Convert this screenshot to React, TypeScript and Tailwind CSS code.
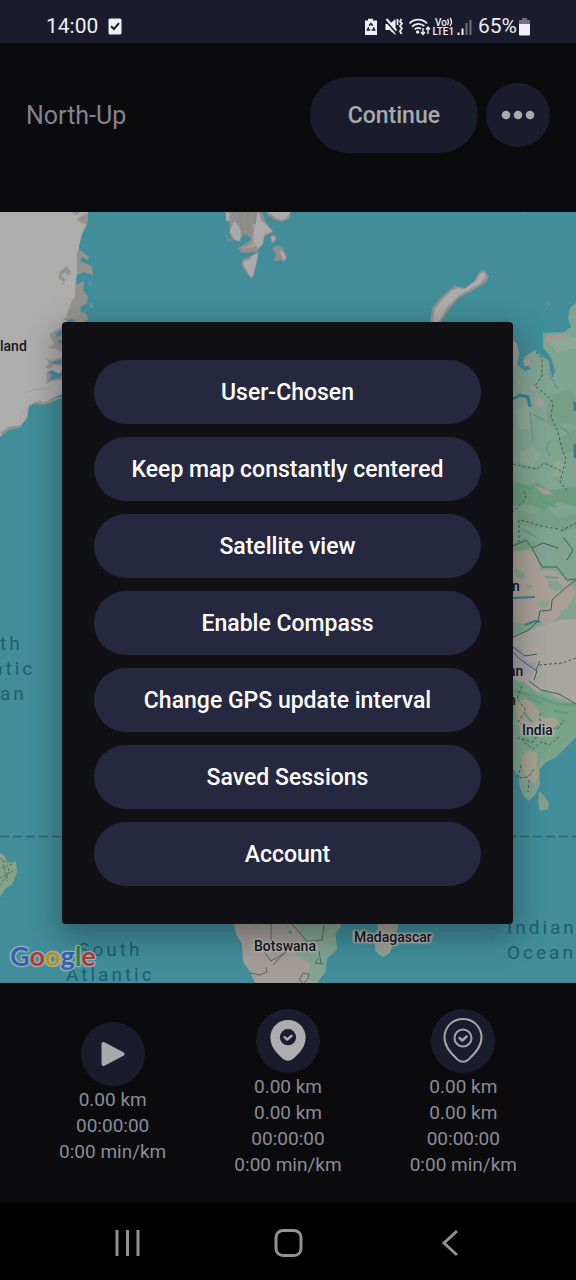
import type { ReactNode } from "react";

const MENU_ITEMS = [
  "User-Chosen",
  "Keep map constantly centered",
  "Satellite view",
  "Enable Compass",
  "Change GPS update interval",
  "Saved Sessions",
  "Account",
];

function StatusBar() {
  return (
    <div className="flex items-center justify-between bg-[#1a1c2e] pt-[13px] pr-[46px] pb-[3px] pl-[46px] text-[21px] leading-[27px] text-[#eeeef4]">
      <div className="flex items-center gap-[10px]">
        <span>14:00</span>
        <svg width="14" height="17" viewBox="0 0 14 17" aria-hidden="true">
          <rect x="0.5" y="0.5" width="13" height="16" rx="1.5" fill="#eeeef4" />
          <path d="M3 8.2 L6 11 L11 5.2" fill="none" stroke="#1a1c2e" strokeWidth="2" />
        </svg>
      </div>
      <div className="flex items-center">
        <svg width="107" height="20" viewBox="0 0 107 20" aria-hidden="true" fill="#eeeef4">
          <path d="M0 3.5h3V1.8h5v1.7h4V18H0z" />
          <g fill="none" stroke="#1a1c2e" strokeWidth="1.5">
            <path d="M4.2 8.8 L5.9 6.4 L7.7 8.8" />
            <path d="M3.7 10.3 L2.5 13 H5.3" />
            <path d="M8.3 10.3 L9.6 13 H6.6" />
          </g>
          <path d="M20.5 7h4l6-5v16l-6-5h-4z" />
          <path d="M20.5 3 L33 17.500" stroke="#1a1c2e" strokeWidth="2.5" />
          <path d="M21.5 2 L31.5 13.500" stroke="#eeeef4" strokeWidth="2" />
          <g fill="none" stroke="#eeeef4" strokeWidth="1.8">
            <path d="M32.5 2v6" />
            <path d="M36.5 2 l-1.500 2.500 2 2 -2 2.500 2 2.500 -2 2.500 1.500 3" />
          </g>
          <g fill="none" stroke="#eeeef4" strokeWidth="1.8">
            <path d="M44.5 6.5 C49 1.3 57.5 1.3 62 6.5" />
            <path d="M47 9.6 C50.5 6 56 6 59.3 9.2" />
            <path d="M49.7 12.4 C51.6 10.6 54.2 10.6 56 12" />
          </g>
          <circle cx="52.6" cy="15" r="1.7" />
          <path d="M58 11v6m-2-2 2 2.400 2-2.400M63 17v-6.500m-2 2 2-2.400 2 2.400" fill="none" stroke="#eeeef4" strokeWidth="1.4" />
          <g fontFamily="Roboto, sans-serif" fontWeight="500">
            <text x="70" y="8.5" fontSize="10">Vo</text>
            <text x="67.5" y="18" fontSize="10">LTE1</text>
          </g>
          <path d="M82.5 2q2 3 0 6M85 1q3 4 0 8" fill="none" stroke="#eeeef4" strokeWidth="1.3" />
          <path d="M92.500 15.500h2V18h-2zM96.500 11.500h2V18h-2z" />
          <path d="M100.500 6h2v12h-2zM104.500 3h2v15h-2z" fill="#6d6e7b" />
        </svg>
        <span className="ml-[6px]">65%</span>
        <svg className="ml-[2px]" width="11" height="18" viewBox="0 0 11 18" aria-hidden="true">
          <path d="M0 2h3V0h5v2h3v5H0z" fill="#73747f" />
          <path d="M0 6h11v10.500q0 1-1 1H1q-1 0-1-1z" fill="#eeeef4" />
        </svg>
      </div>
    </div>
  );
}

function Header() {
  return (
    <header className="flex items-center gap-2 px-[26px] pt-[34px] pb-[59px]">
      <h1 className="flex-1 pt-[2px] text-[25px] leading-8 text-[#83838f]">North-Up</h1>
      <button type="button" className="rounded-full bg-[#1a1c2d] px-[38px] pt-[23px] pb-[21px] text-[23px] leading-8 font-medium text-[#a9a9ab]">
        Continue
      </button>
      <button type="button" aria-label="More options" className="flex size-16 items-center justify-center rounded-full bg-[#1a1c2d]">
        <svg width="34" height="10" viewBox="0 0 34 10" fill="#aaaaac" aria-hidden="true">
          <circle cx="5" cy="5" r="4.300" />
          <circle cx="17" cy="5" r="4.300" />
          <circle cx="29" cy="5" r="4.300" />
        </svg>
      </button>
    </header>
  );
}

function MapTerrain() {
  return (
    <svg className="absolute inset-0 size-full" viewBox="0 212 576 771" preserveAspectRatio="xMidYMid slice" aria-hidden="true">
      <rect y="212" width="576" height="771" fill="#418d9a" />

      {/* Greenland */}
      <path d="M0 212H88L87 224 82 234 79 246 79 262 76 280 75 300 72 312 67 321 62 330V394L53 398 45 403 36 402 29 406 27 418 20 427 8 430 0 437z" fill="#adadad" />
      <g fill="#949390">
        <path d="M70 212h10l-3 3zM78 218l10-5-1 12-10-4zM77 250l6 2 6 5-2 3-5-3-2 4 12 5 1 9-9-3-7 3zM76 285l8-4-1 9 5 7-1 6-5 3-7-6zM72 300l8-4 2 8-2 7 7 3 1 6-8 4-8-5-10 2 4-4z" />
        <path d="M60 271l7-5 4 6-3 4-3-4-4 4 5 4-3 2-5-5zM61 283l4 1-3 1zM89 280l2 4-1 3zM90 302l4 5-3 1z" />
        <path d="M53 332l9-6v26l-6-3-8-1 6-4-5-10zM46 358l6 3 10-4v9l-8-1-4 4-5-1 4-5zM47 371l7-2 2 6 6-1v6l-10 1-6 3zM0 433l8-6 8-1 5-2-3 4-9 2-7 5zM29 406l5-2 6-4 3 3 8-4 11-3v2l-10 4-8 3-8-1z" />
      </g>
      <g fill="#4290a0">
        <path d="M55 334l7-4v5l-5 2zM52 362l9-2v3l-7 1zM48 372l5-1 7 3 2-4v7l-12 3 2-5zM56 341l6-1v3z" />
      </g>
      <path d="M21 414l7-7-1 10-7 4M25 393l8-3 16-2" fill="none" stroke="#a69f9e" strokeWidth="1" />

      {/* Svalbard */}
      <g fill="#918f8d">
        <path d="M225 212h37l4 10 7 10-8 4-3 9-5 7-15 1-4-5 12-7 1-3-7-4-5 8-7-3-3-7 1-8-5-8zM224 233l6 7-1 2zM266 212h25l-2 7-8 3-8-3-5-4zM270 236l5-1 2 5-5 4zM272 248l7-3 5 5 3 6-2 6-4-2-7 1 2-7zM242 260l17-8-2 10-4 15-3 1-8-12z" />
      </g>
      <g fill="#ababab">
        <path d="M226 212l4 1-1 7-3 1zM234 221l5 6 2 5-1 9-6-2-4-8zM258 212l4 9 11 10-9 4-1 9-5 4-5-5 1-13-1-12zM268 212h22l-3 6-5 2-6-2-5-4zM271 237l3-1 1 4-3 1zM243 262l6-2 3-4 6-3-2 11-3 12-2 1-7-11zM280 251l3 1 3 6-3 2z" />
      </g>
      <path d="M241 212l2 22M248 212l1 23M255 212l-1 12" stroke="#8d8b88" strokeWidth="4" />
      <path d="M242 249l14-7-2 5z" fill="#a6a185" />

      {/* Novaya Zemlya */}
      <path d="M429 326L432 309 438 300 448 291 455 286 465 288 475 280 478 273 484 270 489 276 486 283 479 287 470 292 460 297 450 308 441 322z" fill="#91908f" />
      <path d="M432 324L435 309 441 301 451 291 458 288 465 289 476 281 480 274 484 272 486 277 480 284 468 290 458 296 448 306 438 323z" fill="#adacac" />
      <path d="M523 212l4 3-3-1zM548 299l1 5-1 3z" fill="#8d9892" />

      {/* Eurasia */}
      <path d="M576 303L570 308 568 318 571 327 564 332 543 333 543 348 548 353 552 360 555 371 553 378 550 372 549 361 543 357 535 350 532 352 524 357 525 363 531 369 525 371 517 365 513 367V768L518 775 520 788 524 796 529 801 536 794 540 784 539 770 546 762 556 757 566 747 576 737z" fill="#81a391" />
      <path d="M513 340l4 4 2 9-2 13-4 2z" fill="#9b9d9b" />
      <path d="M539 791l6 6 4 6-1 6-8 2-2-9z" fill="#83a18b" />
      <g fill="#779f87">
        <path d="M548 402l8-8 14-4 6 8v27l-14-3-8 8-7-8zM517 510l16 4 12-8 14 12 17-5v15l-15 4-10-7-15 4-19-5zM557 440l19-11v22l-12 2zM513 542l10-4 13 6-11 7-12-1z" />
      </g>
      <path d="M513 482l10 4 14-3 12 7 27-3v20l-18-5-14 8-17-6-14 2z" fill="#6c9c7f" />
      <g fill="#8da895">
        <path d="M516 410l10-6 10 9-3 14-14 4zM546 340l20-5 10 3v10l-18 5zM520 452l12-6 9 8-8 12-13-3zM556 460l10 5-4 13-10-3z" />
      </g>
      <g fill="#a49a96">
        <path d="M523 360l6-2 2 5-6 4zM546 336l18-2 4 4-13 1-9 5zM532 402l7-5 6 6-4 5zM529 384l7 4-4 4zM534 486l14 4 6 5-11-1zM515 380l7 3-4 2z" />
      </g>
      <path d="M513 552l13-2 9 2 5 18 15 1 20 17v8l-10 14-13 13-17 8-12-4-10 2z" fill="#a99f98" />
      <g fill="#84a28e">
        <path d="M516 568l7 4 3 7-8-1-4-5zM548 581l9-1 7 8-8 4-7-4zM526 584l7 2-5 4zM560 611l10-4 6 5v7l-9 2zM541 600l9 2-4 6-9-2zM513 622l12 2 14-5 4 5-12 6-18 6zM556 545l12 3 3 10-12-1z" />
      </g>
      <path d="M513 635l27-8 20-7 16-1v84l-20-5-10-8-10 3-11-11-12-2z" fill="#a9a6a1" />
      <path d="M513 646l8 1 1 8 9 8 6-3-2 9-4 8-10-6-8-1z" fill="#a29da6" />
      <path d="M513 679l10 4 17 11 19 8 17 4v31l-14 9-5 10-13 3-9 8-6-10-6-14-10-4z" fill="#78a389" />
      <path d="M515 701l12-2 9 8 7 11 10-1 6 5-6 7-17-3-11 7-8-10zM521 758l8-8 8 3v13l3 7-5 11-8-5-3-7z" fill="#a5a090" />
      <path d="M513 691l20 5 24 8 19 1" fill="none" stroke="#6c997d" strokeWidth="3" />
      <g fill="none" stroke="#357f91" strokeWidth="3">
        <path d="M513 399l7-4 8 2 2 10" />
        <path d="M575 402v9M575 444v14" />
        <path d="M513 598l22-1M525 625l10-4 5 1" strokeWidth="2" />
      </g>
      <path d="M530 412l3 28M533 414l12 7M550 441q-6 7 0 15M548 373l10 16" fill="none" stroke="#588d92" strokeWidth="1" />
      <g fill="none" stroke="#3a6155" strokeWidth="1">
        <path d="M536 352l6 6v18l-7 10 9 7 9 9-2 15 7 15 4 17 4 10-6 23 7 8M513 464l12 3 12 2 7-6 11 5 6 3M524 491l2 7-13 14M519 520v22M521 520l20 6 17 3M561 531l15-8" strokeDasharray="3 2" />
        <path d="M513 546l13-6 6 8 10 19h15l10 13 9-1M532 548l11-5 15 5M563 537l10 13-6 10M576 580l-13 10-11 10-1 10-11 1-2 10-9 9-16 7M513 647l12 9 12-2M536 670l4-9M513 652l8 8 16 11-3 9M529 681l12 9 18 4 17 10" />
        <path d="M539 665l24-2 13-5M522 686l-5 13 9 11-8 12 12 7 11-4 16 4 7-9M540 713v19l-7 10-15-4M528 729l-5 12 10 8 8-7 8 3 10-8M521 765l-3 13 10-1 7-9M529 780l-1 12" strokeDasharray="3 2" />
      </g>
      <g fill="none" stroke="#5a9d81" strokeWidth="2">
        <path d="M518 484l13 5M542 502l15 5M559 426l10 7M522 529l14 8M545 577l13 1M528 698l15 6M554 711l14 2M524 713l8 9" />
      </g>

      {/* South America */}
      <path d="M0 853l4 2 3 6 9 1 1 10-5 13-6 3-6 9z" fill="#84a38a" />
      <path d="M0 858l5 4 8 0M2 868l10-4M0 878l13-7M3 860l2 12 2 9M7 875l-7 11M9 868l-2 10" fill="none" stroke="#557b67" strokeWidth="1" strokeDasharray="3 1" />

      {/* Southern Africa */}
      <path d="M233 920h108v6l-6 8 2 15-10 9-2 14-8 11h-62l-5-11-7-10-1-18-6-10z" fill="#a49c98" />
      <path d="M292 920h49v6l-6 8 2 15-10 9-2 14-8 11-9-4 2-16-15-8 7-15-2-10z" fill="#82a391" />
      <path d="M252 925l6-1 2 4-6 1zM284 926l6-1-1 7zM306 940l6-2-1 8z" fill="#83a692" />
      <path d="M271 923v18l-9 8 9 12 14-8 6-6 15-6M292 924l15 17 15-1 2-15M319 951l2 12M273 965l16-17M250 973l10 2 7-3-1-5M300 979l3-6 6 1-1 5-5 5-4-5M319 958l-4 5 8 1" fill="none" stroke="#51685f" strokeWidth="1" />
      <circle cx="290" cy="932" r="1.500" fill="#35889a" />
      <path d="M377 920h21v8l-5 15-3 10-7 4-8-6v-10l3-9z" fill="#90a493" />
      <path d="M378 920h13l-1 20-6 12-6-4z" fill="#a39d98" />

      <path d="M0 836.500H576" fill="none" stroke="#2b6571" strokeWidth="1.500" strokeDasharray="9 4" />
    </svg>
  );
}

const HALO =
  "[text-shadow:0_0_3px_#b4b4b4,0_0_3px_#b4b4b4,2px_1px_2px_#b4b4b4,-2px_-1px_2px_#b4b4b4,1px_-1px_2px_#b4b4b4,-1px_1px_2px_#b4b4b4]";

function MapView() {
  return (
    <section aria-label="Map" className="relative flex-1 overflow-hidden">
      <MapTerrain />
      <div className="text-[14px] leading-4 font-medium text-[#16181c]">
        <span className="absolute top-[126px] left-0">land</span>
        <span className={`absolute top-[726px] left-[254px] ${HALO}`}>Botswana</span>
        <span className={`absolute top-[717px] left-[354px] ${HALO}`}>Madagascar</span>
        <span className={`absolute top-[510px] left-[522px] ${HALO}`}>India</span>
        <span className="absolute top-[366px] left-[512px]">n</span>
        <span className="absolute top-[451px] left-[508px]">an</span>
        <span className="absolute top-[480px] left-[508px]">n</span>
      </div>
      <div className="text-[19px] leading-[25px] tracking-[3px] text-[#1c5f70]">
        <div className="absolute top-[419px] left-0">
          <p>th</p>
          <p className="-ml-2">ntic</p>
          <p>an</p>
        </div>
        <p className="absolute top-[725px] left-[66px] text-center">
          South
          <br />
          Atlantic
        </p>
        <p className="absolute top-[703px] left-[507px]">
          Indian
          <br />
          Ocean
        </p>
      </div>
      <div className="absolute bottom-[9px] left-[10px] font-[Lato,sans-serif] text-[27px] leading-9 font-bold [text-shadow:0_0_2px_#9fb6bb,1px_1px_1px_#9fb6bb,-1px_-1px_1px_#9fb6bb,1px_-1px_1px_#9fb6bb,-1px_1px_1px_#9fb6bb]">
        <span className="text-[#3561ae]">G</span>
        <span className="text-[#b33a35]">o</span>
        <span className="text-[#bd9118]">o</span>
        <span className="text-[#3561ae]">g</span>
        <span className="text-[#2f8546]">l</span>
        <span className="text-[#b33a35]">e</span>
      </div>
    </section>
  );
}

const PIN = "M22 2 C12 2 3.500 9.500 3.500 20.500 C3.500 30 10.500 37 16.500 42.500 Q22 47 27.500 42.500 C33.500 37 40.500 30 40.500 20.500 C40.500 9.500 32 2 22 2z";

function PlayIcon() {
  return (
    <svg width="26" height="28" viewBox="0 0 26 28" aria-hidden="true">
      <path d="M3.500 4 L22.500 14 L3.500 24z" fill="#a9a9ab" stroke="#a9a9ab" strokeWidth="4" strokeLinejoin="round" />
    </svg>
  );
}

function PinFilledIcon() {
  return (
    <svg width="42" height="46" viewBox="0 0 44 48" aria-hidden="true">
      <path d={PIN} fill="#adadae" />
      <circle cx="22" cy="20" r="8.500" fill="#1a1c2d" />
      <path d="M18.500 20l2.700 2.500 4.500-4" fill="none" stroke="#adadae" strokeWidth="2.500" strokeLinecap="round" strokeLinejoin="round" />
    </svg>
  );
}

function PinOutlineIcon() {
  return (
    <svg width="44" height="48" viewBox="0 0 44 48" aria-hidden="true" fill="none" stroke="#a4a4a7" strokeWidth="2">
      <path d={PIN} />
      <circle cx="22" cy="21" r="8.500" />
      <path d="M18.500 21l2.700 2.500 4.500-4" strokeWidth="2.500" strokeLinecap="round" strokeLinejoin="round" />
    </svg>
  );
}

function Stat({ label, icon, lines }: { label: string; icon: ReactNode; lines: string[] }) {
  return (
    <div className="flex flex-col items-center">
      <button type="button" aria-label={label} className="mb-px flex size-16 items-center justify-center rounded-full bg-[#1a1c2d]">
        {icon}
      </button>
      {lines.map((line, i) => (
        <p key={i}>{line}</p>
      ))}
    </div>
  );
}

function Stats() {
  return (
    <section className="grid grid-cols-3 items-center px-[25px] pt-[26px] pb-[25px] text-[19px] leading-[26px] text-[#8b8b97]">
      <Stat label="Start" icon={<PlayIcon />} lines={["0.00 km", "00:00:00", "0:00 min/km"]} />
      <Stat label="Checkpoint" icon={<PinFilledIcon />} lines={["0.00 km", "0.00 km", "00:00:00", "0:00 min/km"]} />
      <Stat label="Waypoint" icon={<PinOutlineIcon />} lines={["0.00 km", "0.00 km", "00:00:00", "0:00 min/km"]} />
    </section>
  );
}

function NavBar() {
  return (
    <nav className="grid grid-cols-3 justify-items-center bg-black px-[46px] pt-6 pb-[21px] text-[#929292]">
      <button type="button" aria-label="Recent apps">
        <svg width="32" height="32" viewBox="0 0 32 32" fill="none" stroke="currentColor" strokeWidth="3" aria-hidden="true">
          <path d="M6 3v26M16.500 3v26M27 3v26" />
        </svg>
      </button>
      <button type="button" aria-label="Home">
        <svg width="32" height="32" viewBox="0 0 32 32" fill="none" stroke="currentColor" strokeWidth="3" aria-hidden="true">
          <rect x="4" y="3.500" width="25" height="25" rx="7" />
        </svg>
      </button>
      <button type="button" aria-label="Back">
        <svg width="32" height="32" viewBox="0 0 32 32" fill="none" stroke="currentColor" strokeWidth="3" aria-hidden="true">
          <path d="M24 4 L11 16 L24 28" />
        </svg>
      </button>
    </nav>
  );
}

function MenuDialog() {
  return (
    <div className="absolute inset-0 flex items-center justify-center pr-[63px] pl-[62px]">
      <div role="dialog" aria-label="Options" className="flex w-full flex-col gap-[13px] rounded-[4px] bg-[#101015] px-8 py-[38px] shadow-[0_10px_30px_4px_rgba(0,0,0,0.3)]">
        {MENU_ITEMS.map((item) => (
          <button key={item} type="button" className="rounded-full bg-[#262840] pt-[17px] pb-[15px] text-[23px] leading-8 font-medium text-white">
            {item}
          </button>
        ))}
      </div>
    </div>
  );
}

export default function App() {
  return (
    <div className="flex min-h-screen flex-col bg-[#0b0b0d] font-[Roboto,sans-serif]">
      <StatusBar />
      <main className="relative flex flex-1 flex-col">
        <Header />
        <MapView />
        <Stats />
        <MenuDialog />
      </main>
      <NavBar />
    </div>
  );
}
